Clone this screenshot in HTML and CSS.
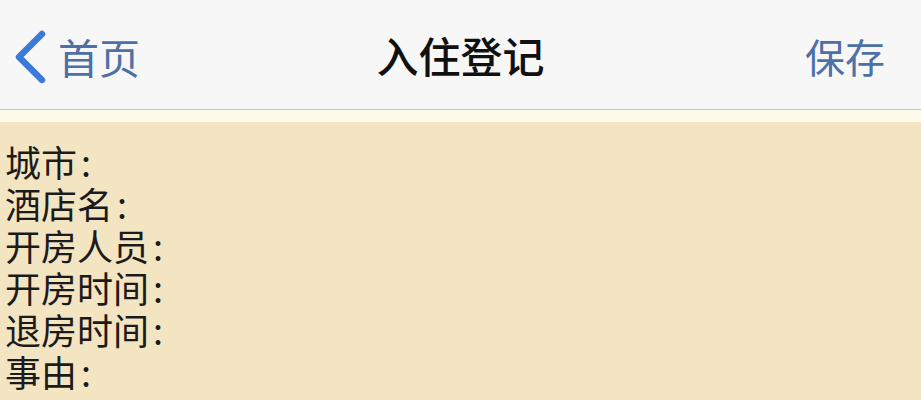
FILE: index.html
```html
<!DOCTYPE html>
<html lang="zh-CN">
<head>
    <meta charset="UTF-8">
    <meta name="viewport" content="width=device-width, initial-scale=1.0">
    <title>入住登记</title>
    <link rel="stylesheet" href="styles.css">
</head>
<body>
    <header class="nav-bar">
        <a class="nav-back" href="#">
            <svg class="back-icon" width="34" height="54" viewBox="0 0 34 54">
                <polyline points="28,4 5,27 28,50" fill="none" stroke="#3b7ad6" stroke-width="6.5" stroke-linecap="round" stroke-linejoin="round"/>
            </svg>
            <span>首页</span>
        </a>
        <h1 class="nav-title">入住登记</h1>
        <a class="nav-save" href="#">保存</a>
    </header>
    <div class="nav-gap"></div>

    <!-- 登记信息 -->
    <div class="record">
        <div class="record-row">城市<span class="colon">:</span></div>
        <div class="record-row">酒店名<span class="colon">:</span></div>
        <div class="record-row">开房人员<span class="colon">:</span></div>
        <div class="record-row">开房时间<span class="colon">:</span></div>
        <div class="record-row">退房时间<span class="colon">:</span></div>
        <div class="record-row">事由<span class="colon">:</span></div>
    </div>
</body>
</html>
```

FILE: styles.css
```css
body {
    margin: 0;
    font-family: "Noto Sans CJK SC", "Noto Sans", sans-serif;
    background: #f3e4c2; /* 米黄色底 */
    min-height: 100vh;
}
.nav-bar {
    display: flex;
    align-items: center;
    justify-content: space-between;
    height: 109px;
    padding: 0 36px 0 14px;
    background: #f7f7f8;
    border-bottom: 1px solid #c6c6ca;
    position: relative;
}
.nav-back {
    display: flex;
    align-items: center;
    gap: 10px;
    color: #4d70a6;
    text-decoration: none;
    font-size: 41px;
    padding-top: 2px;
}
.back-icon {
    display: block;
    margin-top: 2px;
}
.nav-title {
    position: absolute;
    left: 0;
    right: 0;
    text-align: center;
    margin: 0;
    font-size: 42px;
    font-weight: 500;
    color: #111;
    pointer-events: none;
}
.nav-save {
    color: #4d70a6;
    text-decoration: none;
    font-size: 40px;
    padding-top: 2px;
}
.nav-gap {
    height: 12px;
    background: #fdfaec;
}
.record {
    padding: 18px 5px 0;
}
.record-row {
    font-size: 36px;
    line-height: 42px;
    height: 42px;
    color: #1b1b1b;
}
.colon {
    margin-left: 4px;
}
```
